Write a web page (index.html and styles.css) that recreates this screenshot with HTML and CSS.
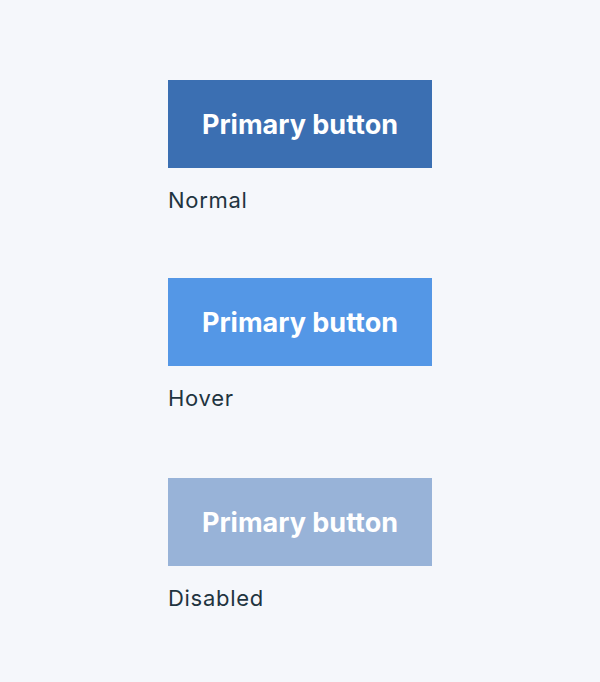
FILE: index.html
```html
<!DOCTYPE html>
<html>
<head>
<meta charset="utf-8">
<link rel="stylesheet" href="styles.css">
</head>
<body>
<main class="states">
  <section class="state">
    <button class="btn btn-normal">Primary button</button>
    <p class="label">Normal</p>
  </section>
  <section class="state">
    <button class="btn btn-hover">Primary button</button>
    <p class="label">Hover</p>
  </section>
  <section class="state">
    <button class="btn btn-disabled" disabled>Primary button</button>
    <p class="label">Disabled</p>
  </section>
</main>
</body>
</html>
```
FILE: styles.css
```css
html, body {
  margin: 0;
  padding: 0;
  background: #f5f7fb;
}
body {
  font-family: Inter, "Liberation Sans", sans-serif;
}
.states {
  display: flex;
  flex-direction: column;
  gap: 66px;
  padding: 80px 0 0 168px;
}
.state {
  display: flex;
  flex-direction: column;
  align-items: flex-start;
}
.state:last-child {
  margin-top: 2px;
}
.btn {
  width: 264px;
  height: 88px;
  border: 0;
  margin: 0;
  padding: 0;
  color: #ffffff;
  font-family: Inter, "Liberation Sans", sans-serif;
  font-size: 27px;
  font-weight: 700;
  letter-spacing: 0;
}
.btn-normal { background: #3b6fb2; }
.btn-hover { background: #5497e6; }
.btn-disabled { background: #98b3d8; }
.label {
  margin: 20px 0 0;
  font-size: 22px;
  line-height: 24px;
  letter-spacing: 0.7px;
  color: #1f3440;
}
```
